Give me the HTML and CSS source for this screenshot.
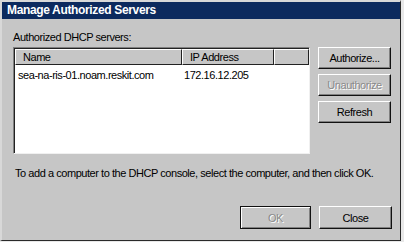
FILE: index.html
```html
<!DOCTYPE html>
<html lang="en">
<head>
    <meta charset="UTF-8">
    <title>Manage Authorized Servers</title>
    <link rel="stylesheet" href="styles.css">
</head>
<body>
    <div class="window">
        <div class="titlebar">Manage Authorized Servers</div>
        <div class="content">
            <div class="top-row">
                <div class="list-area">
                    <div class="label">Authorized DHCP servers:</div>
                    <div class="listbox">
                        <div class="list-header">
                            <div class="col col-name">Name</div>
                            <div class="col col-ip">IP Address</div>
                            <div class="col col-rest"></div>
                        </div>
                        <div class="list-row">
                            <div class="cell col-name">sea-na-ris-01.noam.reskit.com</div>
                            <div class="cell col-ip">172.16.12.205</div>
                        </div>
                    </div>
                </div>
                <div class="side-buttons">
                    <button class="btn">Authorize...</button>
                    <button class="btn disabled">Unauthorize</button>
                    <button class="btn">Refresh</button>
                </div>
            </div>
            <p class="hint">To add a computer to the DHCP console, select the computer, and then click OK.</p>
            <div class="bottom-buttons">
                <button class="btn default disabled">OK</button>
                <button class="btn">Close</button>
            </div>
        </div>
    </div>
</body>
</html>
```

FILE: styles.css
```css
body {
    margin: 0;
    padding: 0;
    background-color: #e8e8e8;
    font-family: "Liberation Sans", Arial, sans-serif;
    font-size: 11px;
    letter-spacing: -0.45px;
    color: #000;
}

.window {
    width: 401px;
    height: 241px;
    box-sizing: border-box;
    background-color: #c6c6c6;
    border-top: 2px solid #d8d8d8;
    border-left: 2px solid #d8d8d8;
    border-right: 1px solid #2a2a2a;
    border-bottom: 1px solid #2a2a2a;
    display: flex;
    flex-direction: column;
}

.titlebar {
    height: 17px;
    line-height: 17px;
    background-color: #0c2a5e;
    color: #fff;
    font-weight: bold;
    font-size: 12px;
    letter-spacing: -0.35px;
    padding-left: 5px;
}

.content {
    flex-grow: 1;
    padding: 11px 8px 0 11px;
    display: flex;
    flex-direction: column;
}

.top-row {
    display: flex;
    gap: 8px;
}

.label {
    height: 14px;
    line-height: 14px;
    margin-bottom: 3px;
}

.listbox {
    width: 297px;
    height: 107px;
    box-sizing: border-box;
    background-color: #fff;
    border-top: 1px solid #808080;
    border-left: 1px solid #808080;
    border-right: 1px solid #f0f0f0;
    border-bottom: 1px solid #f0f0f0;
    box-shadow: inset 1px 1px 0 #222;
}

.list-header {
    display: flex;
    margin: 1px 0 0 1px;
}

.col {
    height: 16px;
    line-height: 15px;
    box-sizing: border-box;
    background-color: #c6c6c6;
    border-top: 1px solid #fff;
    border-left: 1px solid #fff;
    border-right: 1px solid #222;
    border-bottom: 1px solid #222;
    padding-left: 7px;
}

.col-name {
    width: 167px;
}

.col-ip {
    width: 92px;
}

.col-rest {
    flex-grow: 1;
}

.list-row {
    display: flex;
    margin-top: 3px;
    height: 14px;
    line-height: 14px;
}

.cell {
    padding-left: 4px;
    box-sizing: border-box;
}

.cell.col-ip {
    padding-left: 3px;
}

.side-buttons {
    display: flex;
    flex-direction: column;
    gap: 5px;
    padding-top: 17px;
}

.btn {
    width: 73px;
    height: 22px;
    padding: 0;
    box-sizing: border-box;
    font-family: inherit;
    font-size: 11px;
    letter-spacing: -0.45px;
    color: #000;
    background-color: #c6c6c6;
    border-top: 1px solid #fff;
    border-left: 1px solid #fff;
    border-right: 1px solid #111;
    border-bottom: 1px solid #111;
    box-shadow: inset -1px -1px 0 #808080;
}

.btn.disabled {
    color: #8a8a8a;
    text-shadow: 1px 1px 0 #fff;
}

.btn.default {
    border: 1px solid #111;
    box-shadow: inset 1px 1px 0 #fff, inset -1px -1px 0 #808080;
}

.hint {
    margin: 12px 0 0 2px;
    height: 14px;
    line-height: 14px;
}

.bottom-buttons {
    display: flex;
    justify-content: flex-end;
    gap: 8px;
    margin-top: 26px;
}

.bottom-buttons .btn {
    height: 23px;
}

.bottom-buttons .default {
    width: 71px;
}
```
